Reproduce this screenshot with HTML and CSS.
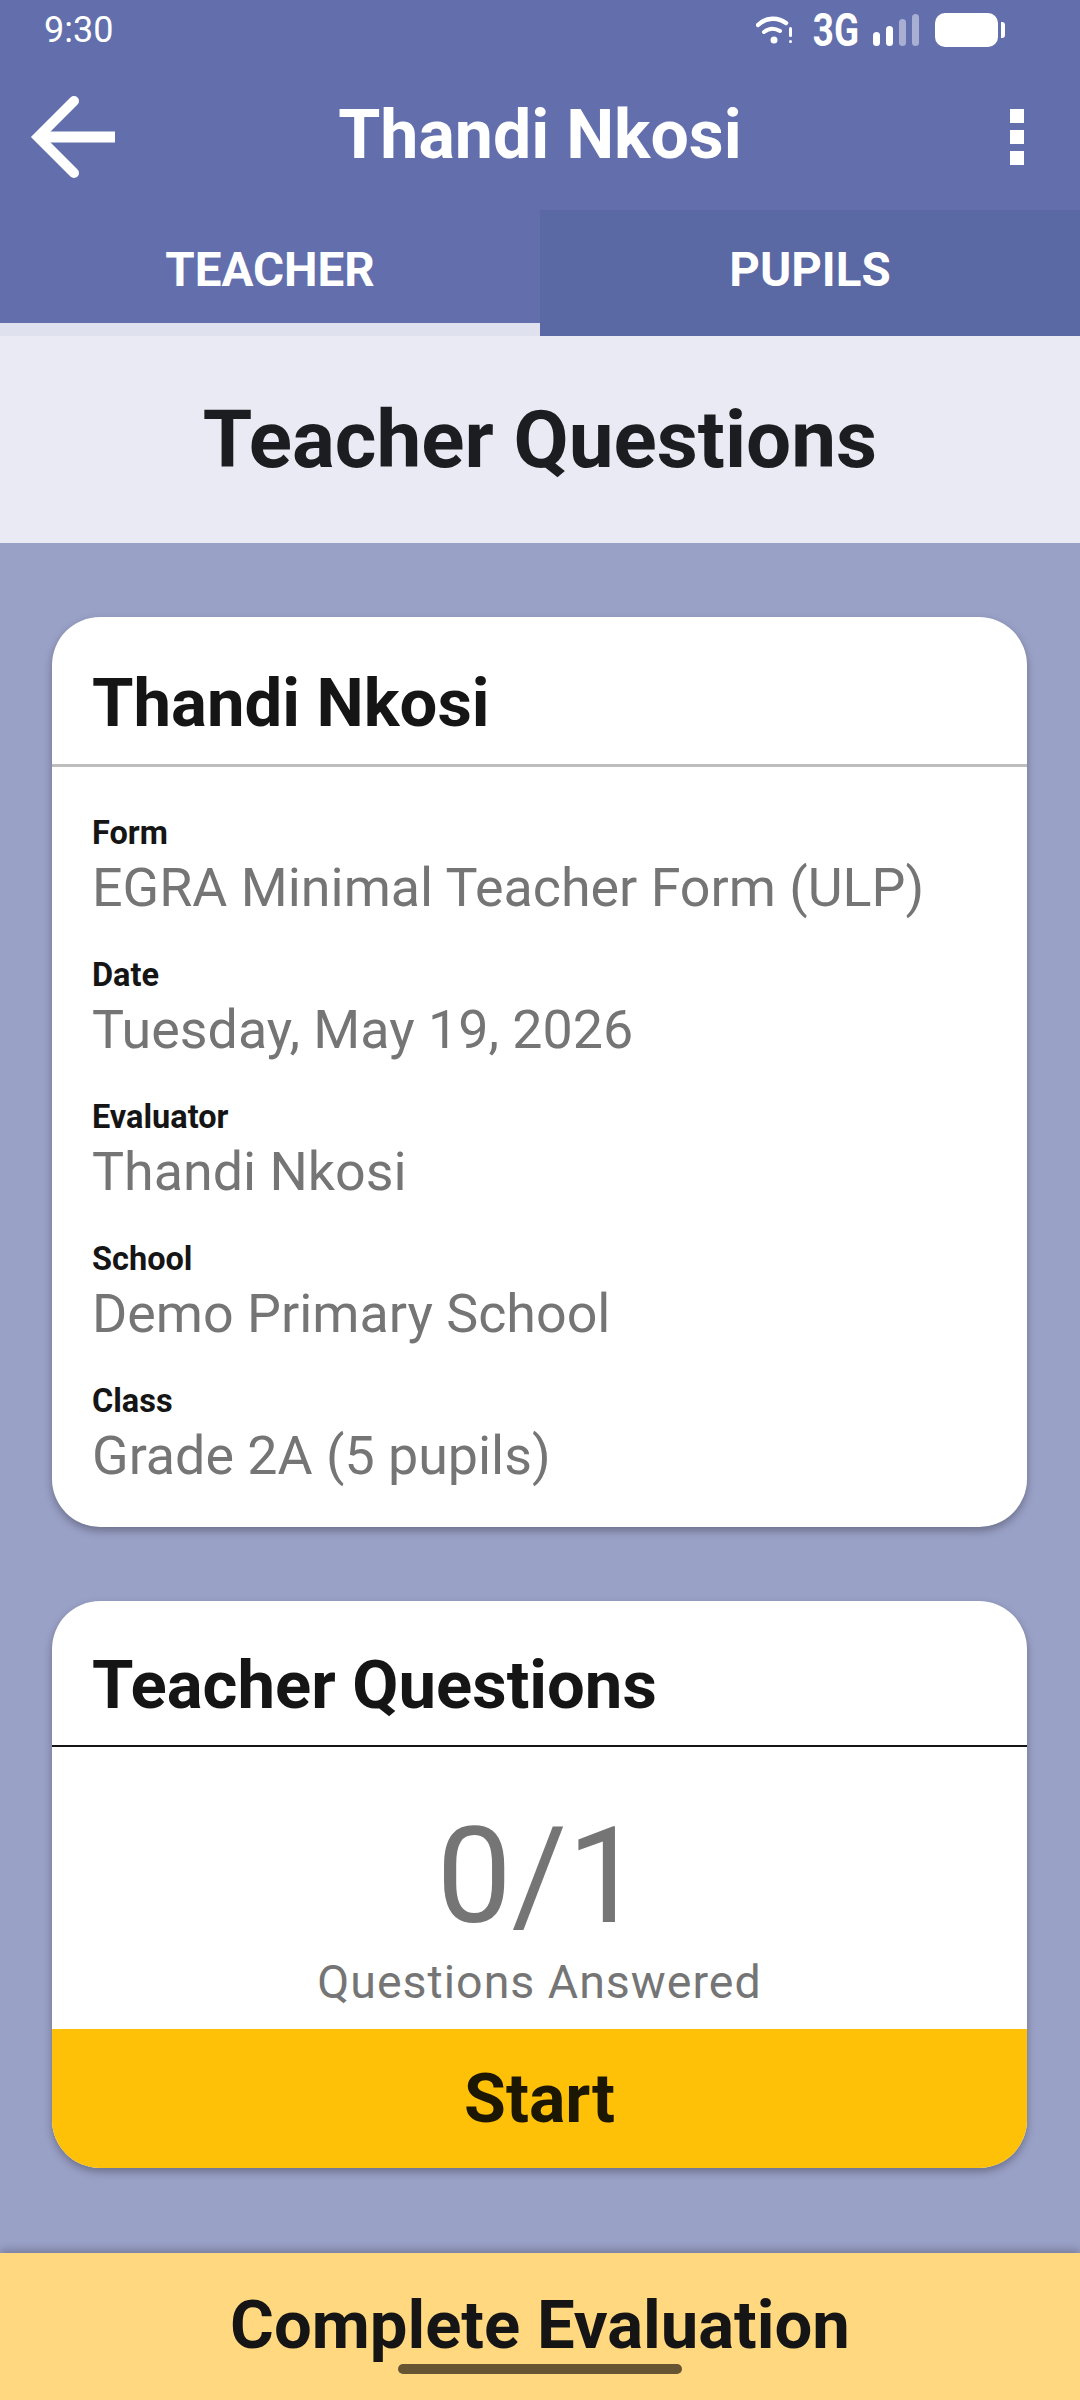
FILE: index.html
```html
<!DOCTYPE html>
<html lang="en">
<head>
    <meta charset="UTF-8">
    <meta name="viewport" content="width=device-width, initial-scale=1.0">
    <title>Thandi Nkosi</title>
    <link rel="stylesheet" href="styles.css">
</head>
<body>
    <div id="app">
        <div class="status-bar">
            <span class="clock">9:30</span>
            <div class="status-icons">
                <svg class="wifi" width="38" height="30" viewBox="0 0 38 30">
                    <path d="M2 10C10 2 22 2 30 8" fill="none" stroke="#fff" stroke-width="4.5" stroke-linecap="round"/>
                    <path d="M8 17C13 13 19 13 24 16" fill="none" stroke="#fff" stroke-width="4" stroke-linecap="round"/>
                    <circle cx="18" cy="25" r="3.5" fill="#fff"/>
                    <rect x="33" y="12" width="3" height="10" rx="1.5" fill="#fff"/>
                    <rect x="33" y="25" width="3" height="3" rx="1.5" fill="#fff"/>
                </svg>
                <span class="network">3G</span>
                <div class="signal">
                    <span class="bar bar-1"></span>
                    <span class="bar bar-2"></span>
                    <span class="bar bar-3 off"></span>
                    <span class="bar bar-4 off"></span>
                </div>
                <div class="battery"><span class="battery-body"></span><span class="battery-nub"></span></div>
            </div>
        </div>

        <div class="toolbar">
            <svg class="back" width="90" height="90" viewBox="0 0 90 90">
                <path d="M46 9L10 45L46 81" fill="none" stroke="#fff" stroke-width="10" stroke-linecap="round"/>
                <path d="M12 45H87" fill="none" stroke="#fff" stroke-width="11"/>
            </svg>
            <h1 class="toolbar-title">Thandi Nkosi</h1>
            <div class="menu"><span></span><span></span><span></span></div>
        </div>

        <div class="tabs">
            <div class="tab active">TEACHER</div>
            <div class="tab">PUPILS</div>
        </div>

        <div class="section-title">Teacher Questions</div>

        <div class="content">
            <div class="card">
                <h2 class="card-header">Thandi Nkosi</h2>
                <div class="details">
                    <div class="field"><div class="label">Form</div><div class="value">EGRA Minimal Teacher Form (ULP)</div></div>
                    <div class="field"><div class="label">Date</div><div class="value">Tuesday, May 19, 2026</div></div>
                    <div class="field"><div class="label">Evaluator</div><div class="value">Thandi Nkosi</div></div>
                    <div class="field"><div class="label">School</div><div class="value">Demo Primary School</div></div>
                    <div class="field"><div class="label">Class</div><div class="value">Grade 2A (5 pupils)</div></div>
                </div>
            </div>

            <div class="card">
                <h2 class="card-header dark">Teacher Questions</h2>
                <div class="progress">
                    <div class="count">0/1</div>
                    <div class="count-label">Questions Answered</div>
                </div>
                <button class="start-button">Start</button>
            </div>
        </div>

        <div class="footer">
            <span class="footer-text">Complete Evaluation</span>
            <span class="home-bar"></span>
        </div>
    </div>
</body>
</html>
```

FILE: styles.css
```css
* {
    margin: 0;
    padding: 0;
    box-sizing: border-box;
}

body {
    width: 1080px;
    height: 2400px;
    overflow: hidden;
    font-family: Roboto, "Liberation Sans", sans-serif;
    background: #9aa1c7;
}

#app {
    display: flex;
    flex-direction: column;
    height: 2400px;
}

.status-bar {
    height: 60px;
    display: flex;
    justify-content: space-between;
    align-items: center;
    padding: 0 75px 0 44px;
    background: #626fac;
    color: #fff;
}

.clock {
    font-size: 36px;
}

.status-icons {
    display: flex;
    align-items: center;
}

.wifi {
    margin-right: 18px;
}

.network {
    font-size: 46px;
    font-weight: 700;
    transform: scaleX(0.8);
    margin: 0 8px 0 -5px;
}

.signal {
    display: flex;
    align-items: flex-end;
    gap: 6px;
    height: 32px;
    margin-right: 16px;
}

.bar {
    width: 7px;
    background: #fff;
    border-radius: 4px;
}

.bar.off {
    background: #a9afd2;
}

.bar-1 { height: 14px; }
.bar-2 { height: 20px; }
.bar-3 { height: 27px; }
.bar-4 { height: 32px; }

.battery {
    display: flex;
    align-items: center;
    gap: 3px;
}

.battery-body {
    width: 63px;
    height: 34px;
    background: #fff;
    border-radius: 10px;
}

.battery-nub {
    width: 4px;
    height: 16px;
    background: #fff;
    border-radius: 0 3px 3px 0;
}

.toolbar {
    height: 150px;
    display: flex;
    align-items: center;
    justify-content: center;
    position: relative;
    background: #626fac;
}

.back {
    position: absolute;
    left: 28px;
    top: 32px;
}

.toolbar-title {
    font-size: 68px;
    font-weight: 700;
    color: #fff;
}

.menu {
    position: absolute;
    right: 56px;
    top: 49px;
    display: flex;
    flex-direction: column;
    gap: 7px;
}

.menu span {
    display: block;
    width: 14px;
    height: 14px;
    background: #fff;
}

.tabs {
    height: 126px;
    display: flex;
    background: #626fac;
}

.tab {
    width: 50%;
    display: flex;
    align-items: center;
    justify-content: center;
    padding-bottom: 7px;
    font-size: 47.5px;
    font-weight: 700;
    color: #fff;
    background: #5a68a4;
    position: relative;
}

.tab.active {
    background: #626fac;
}

.tab.active:after {
    content: '';
    position: absolute;
    left: 0;
    right: 0;
    bottom: 0;
    height: 13px;
    background: #dfe1ef;
}

.section-title {
    height: 207px;
    display: flex;
    align-items: center;
    justify-content: center;
    font-size: 80px;
    font-weight: 700;
    color: #1c1d20;
    background: #e9eaf3;
}

.content {
    flex: 1;
    padding: 74px 53px 0 52px;
    display: flex;
    flex-direction: column;
    gap: 74px;
}

.card {
    background: #fff;
    border-radius: 48px;
    overflow: hidden;
    box-shadow: 0 4px 8px rgba(0, 0, 0, 0.3);
}

.card-header {
    height: 150px;
    padding: 24px 0 0 40px;
    display: flex;
    align-items: center;
    font-size: 67px;
    font-weight: 700;
    color: #151515;
    border-bottom: 3px solid #bdbdbd;
}

.card-header.dark {
    height: 146px;
    border-bottom: 2px solid #151515;
}

.details {
    padding: 45px 40px 37px;
    display: flex;
    flex-direction: column;
    gap: 32px;
}

.label {
    font-size: 32.5px;
    font-weight: 700;
    line-height: 42px;
    color: #151515;
}

.value {
    font-size: 53.8px;
    line-height: 68px;
    color: #757575;
}

.progress {
    height: 282px;
    display: flex;
    flex-direction: column;
    align-items: center;
    justify-content: flex-end;
    color: #757575;
}

.count {
    font-size: 134px;
    line-height: 150px;
}

.count-label {
    font-size: 46.5px;
    line-height: 60px;
    margin-bottom: 17px;
    letter-spacing: 1px;
}

.start-button {
    display: block;
    width: 100%;
    height: 139px;
    border: none;
    background: #ffc107;
    color: #1c1703;
    font-family: inherit;
    font-size: 68px;
    font-weight: 700;
}

.footer {
    height: 147px;
    position: relative;
    display: flex;
    justify-content: center;
    padding-top: 33px;
    background: #ffd880;
    box-shadow: 0 -4px 8px rgba(0, 0, 0, 0.2);
}

.footer-text {
    font-size: 67px;
    font-weight: 700;
    color: #151515;
}

.home-bar {
    position: absolute;
    left: 398px;
    top: 111px;
    width: 284px;
    height: 10px;
    border-radius: 5px;
    background: #665433;
}
```
